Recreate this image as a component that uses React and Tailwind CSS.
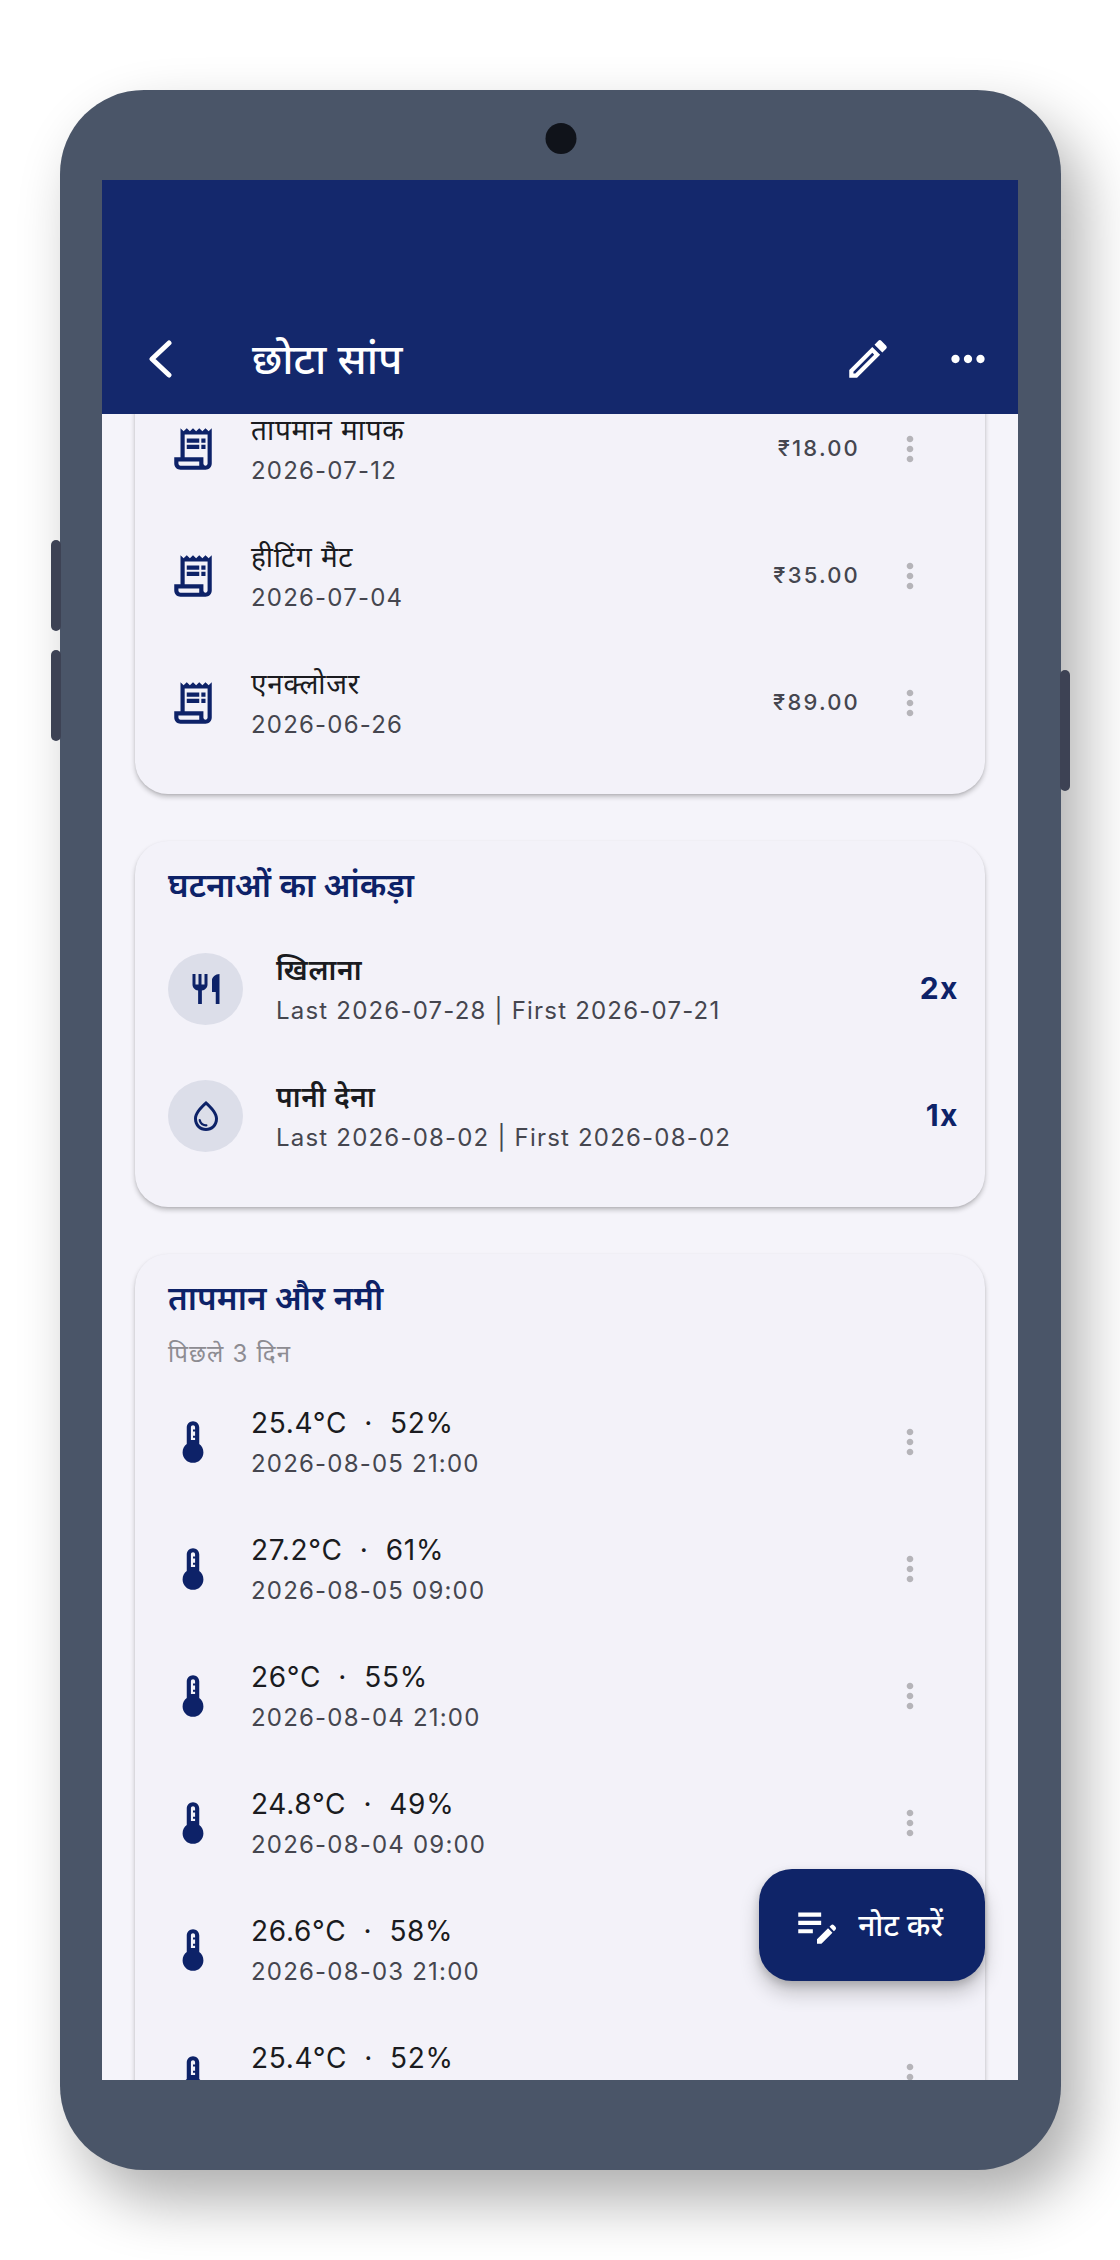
import React from "react";
import {
  MdOutlineReceiptLong,
  MdThermostat,
  MdMoreHoriz,
  MdMoreVert,
  MdOutlineModeEdit,
  MdRestaurant,
  MdOutlineWaterDrop,
  MdEditNote,
} from "react-icons/md";

const expenses = [
  { name: "तापमान मापक", date: "2026-07-12", price: "₹18.00" },
  { name: "हीटिंग मैट", date: "2026-07-04", price: "₹35.00" },
  { name: "एनक्लोजर", date: "2026-06-26", price: "₹89.00" },
];

const events = [
  { name: "खिलाना", range: "Last 2026-07-28 | First 2026-07-21", count: "2x", Icon: MdRestaurant },
  { name: "पानी देना", range: "Last 2026-08-02 | First 2026-08-02", count: "1x", Icon: MdOutlineWaterDrop },
];

const readings = [
  { temp: "25.4°C", humidity: "52%", time: "2026-08-05 21:00" },
  { temp: "27.2°C", humidity: "61%", time: "2026-08-05 09:00" },
  { temp: "26°C", humidity: "55%", time: "2026-08-04 21:00" },
  { temp: "24.8°C", humidity: "49%", time: "2026-08-04 09:00" },
  { temp: "26.6°C", humidity: "58%", time: "2026-08-03 21:00" },
  { temp: "25.4°C", humidity: "52%", time: "" },
];

function Card({ className = "rounded-[33px]", children }) {
  return (
    <section
      className={`bg-[#f3f2f9] pb-7 shadow-[0_3px_5px_rgba(0,0,0,0.22),0_1px_2px_rgba(0,0,0,0.08)] ${className}`}
    >
      {children}
    </section>
  );
}

function CardTitle({ children }) {
  return <h2 className="px-[33px] pt-6 text-[33px] leading-10 font-semibold text-[#0d2268]">{children}</h2>;
}

function MoreButton() {
  return (
    <button type="button" aria-label="विकल्प" className="flex h-24 w-[100px] items-center justify-center text-[#b5b4b9]">
      <MdMoreVert className="size-10" />
    </button>
  );
}

function Row({ leading, title, subtitle, titleClass = "font-normal", children }) {
  return (
    <li className="flex h-[127px] items-center gap-[33px] pl-[33px]">
      {leading}
      <div className="min-w-0 flex-1 pt-[3px]">
        <p className={`text-[28px] leading-[42px] tracking-wide whitespace-pre text-[#1a1b20] ${titleClass}`}>{title}</p>
        <p className="h-10 text-2xl leading-10 tracking-wider whitespace-nowrap text-[#45464f]">{subtitle}</p>
      </div>
      {children}
    </li>
  );
}

export default function App() {
  return (
    <main className="flex h-screen bg-white py-[90px] pr-[59px] pl-[60px] font-['Inter','Noto_Sans',sans-serif]">
      <div className="relative flex flex-1 rounded-[84px] bg-[#4a5568] py-[90px] pr-[43px] pl-[42px] shadow-[20px_30px_60px_rgba(0,0,0,0.32)]">
        <span className="absolute top-[33px] left-1/2 size-[31px] -translate-x-1/2 rounded-full bg-[#10131a]" />
        <span className="absolute top-[450px] -left-[9px] h-[91px] w-[10px] rounded-full bg-[#3d4254]" />
        <span className="absolute top-[560px] -left-[9px] h-[91px] w-[10px] rounded-full bg-[#3d4254]" />
        <span className="absolute top-[580px] -right-[9px] h-[121px] w-[10px] rounded-full bg-[#3d4254]" />

        <div className="relative flex min-w-0 flex-1 flex-col overflow-hidden bg-[#f5f4fa]">
          <header className="z-10 flex h-[234px] shrink-0 items-end bg-[#14286c] text-white">
            <button type="button" aria-label="वापस" className="flex h-[110px] w-[116px] items-center justify-center">
              <svg viewBox="0 0 24 40" className="h-10 w-6" fill="none" stroke="currentColor" strokeWidth="5" strokeLinecap="round" strokeLinejoin="round">
                <path d="M21 4 4 20l17 16" />
              </svg>
            </button>
            <h1 className="flex h-28 flex-1 items-center pl-[34px] text-[42px] font-medium">छोटा सांप</h1>
            <button type="button" aria-label="संपादित करें" className="flex h-[110px] w-[100px] items-center justify-center">
              <MdOutlineModeEdit className="size-[50px]" />
            </button>
            <button type="button" aria-label="अधिक" className="flex h-[110px] w-[100px] items-center justify-center">
              <MdMoreHoriz className="size-[50px]" />
            </button>
          </header>

          <div className="-mt-[29px] flex flex-col gap-[47px] px-[33px]">
            <Card className="rounded-b-[33px]">
              <ul>
                {expenses.map((e) => (
                  <Row
                    key={e.date}
                    leading={<MdOutlineReceiptLong className="size-[50px] text-[#0d2268]" />}
                    title={e.name}
                    subtitle={e.date}
                  >
                    <div className="flex items-center pr-[25px]">
                      <span className="text-[22px] font-medium tracking-widest text-[#45464f]">{e.price}</span>
                      <MoreButton />
                    </div>
                  </Row>
                ))}
              </ul>
            </Card>

            <Card>
              <CardTitle>घटनाओं का आंकड़ा</CardTitle>
              <ul className="pt-5">
                {events.map(({ name, range, count, Icon }) => (
                  <Row
                    key={name}
                    leading={
                      <span className="flex h-[72px] w-[75px] items-center justify-center rounded-[50%] bg-[#dcdee9] text-[#0d2268]">
                        <Icon className="size-9" />
                      </span>
                    }
                    title={name}
                    titleClass="font-semibold"
                    subtitle={range}
                  >
                    <span className="pr-[26px] text-[30px] font-bold tracking-wider text-[#0d2268]">{count}</span>
                  </Row>
                ))}
              </ul>
            </Card>

            <Card>
              <CardTitle>तापमान और नमी</CardTitle>
              <p className="px-[33px] pt-4 pb-1 text-2xl leading-10 tracking-wider text-[#8d8c92]">पिछले 3 दिन</p>
              <ul>
                {readings.map((r, i) => (
                  <Row
                    key={i}
                    leading={<MdThermostat className="size-[50px] text-[#0d2268]" />}
                    title={`${r.temp}  ·  ${r.humidity}`}
                    subtitle={r.time}
                  >
                    <div className="pr-[25px]">
                      <MoreButton />
                    </div>
                  </Row>
                ))}
              </ul>
            </Card>
          </div>

          <button
            type="button"
            className="absolute right-[33px] bottom-[99px] flex h-28 items-center gap-4 rounded-[33px] bg-[#0f2468] pr-[42px] pl-[33px] text-[30px] font-medium text-white shadow-[0_12px_20px_rgba(0,0,0,0.2),0_4px_8px_rgba(0,0,0,0.16)]"
          >
            <MdEditNote className="size-[50px]" />
            नोट करें
          </button>
        </div>
      </div>
    </main>
  );
}
